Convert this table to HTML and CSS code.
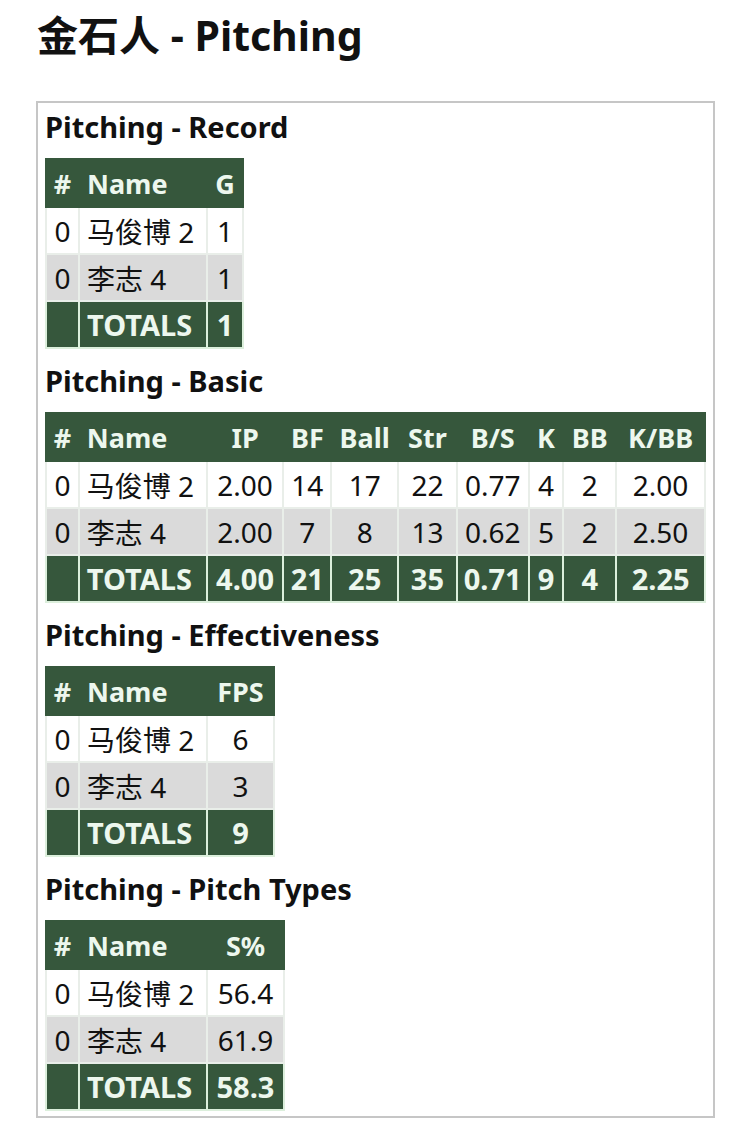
FILE: index.html
```html
<!DOCTYPE html>
<html lang="zh">
<head>
<meta charset="utf-8">
<title>金石人 - Pitching</title>
<link rel="stylesheet" href="styles.css">
</head>
<body>
<h1 class="page-title">金石人 - Pitching</h1>
<div class="report">
  <section class="block">
    <h2 class="block-title">Pitching - Record</h2>
    <table class="stats">
      <thead><tr><th class="num">#</th><th class="name">Name</th><th class="w36">G</th></tr></thead>
      <tbody>
        <tr><td class="num">0</td><td class="name">马俊博 2</td><td>1</td></tr>
        <tr class="alt"><td class="num">0</td><td class="name">李志 4</td><td>1</td></tr>
        <tr class="totals"><td class="num"></td><td class="name">TOTALS</td><td>1</td></tr>
      </tbody>
    </table>
  </section>
  <section class="block">
    <h2 class="block-title">Pitching - Basic</h2>
    <table class="stats">
      <thead><tr><th class="num">#</th><th class="name">Name</th><th class="w77">IP</th><th class="w48">BF</th><th class="w67">Ball</th><th class="w59">Str</th><th class="w72">B/S</th><th class="w35">K</th><th class="w53">BB</th><th class="w89">K/BB</th></tr></thead>
      <tbody>
        <tr><td class="num">0</td><td class="name">马俊博 2</td><td>2.00</td><td>14</td><td>17</td><td>22</td><td>0.77</td><td>4</td><td>2</td><td>2.00</td></tr>
        <tr class="alt"><td class="num">0</td><td class="name">李志 4</td><td>2.00</td><td>7</td><td>8</td><td>13</td><td>0.62</td><td>5</td><td>2</td><td>2.50</td></tr>
        <tr class="totals"><td class="num"></td><td class="name">TOTALS</td><td>4.00</td><td>21</td><td>25</td><td>35</td><td>0.71</td><td>9</td><td>4</td><td>2.25</td></tr>
      </tbody>
    </table>
  </section>
  <section class="block">
    <h2 class="block-title">Pitching - Effectiveness</h2>
    <table class="stats">
      <thead><tr><th class="num">#</th><th class="name">Name</th><th class="w67">FPS</th></tr></thead>
      <tbody>
        <tr><td class="num">0</td><td class="name">马俊博 2</td><td>6</td></tr>
        <tr class="alt"><td class="num">0</td><td class="name">李志 4</td><td>3</td></tr>
        <tr class="totals"><td class="num"></td><td class="name">TOTALS</td><td>9</td></tr>
      </tbody>
    </table>
  </section>
  <section class="block">
    <h2 class="block-title">Pitching - Pitch Types</h2>
    <table class="stats">
      <thead><tr><th class="num">#</th><th class="name">Name</th><th class="w77">S%</th></tr></thead>
      <tbody>
        <tr><td class="num">0</td><td class="name">马俊博 2</td><td>56.4</td></tr>
        <tr class="alt"><td class="num">0</td><td class="name">李志 4</td><td>61.9</td></tr>
        <tr class="totals"><td class="num"></td><td class="name">TOTALS</td><td>58.3</td></tr>
      </tbody>
    </table>
  </section>
</div>
</body>
</html>
```
FILE: styles.css
```css
html, body {
  margin: 0;
  padding: 0;
  background: #ffffff;
}
body {
  font-family: "Noto Sans", "Noto Sans CJK SC", sans-serif;
  color: #111111;
  padding: 0 25px 0 36px;
}
.page-title {
  margin: 0;
  padding: 8px 0 0 1px;
  height: 101px;
  box-sizing: border-box;
  font-size: 41px;
  line-height: 54px;
  font-weight: 700;
  color: #111;
}
.report {
  border: 2px solid #c6c6c6;
  padding: 7px 7px 5px 7px;
  display: flex;
  flex-direction: column;
  gap: 15px;
}
.block {
  display: flex;
  flex-direction: column;
  align-items: flex-start;
}
.block-title {
  margin: 0;
  height: 48px;
  font-size: 29px;
  line-height: 34px;
  font-weight: 700;
  color: #111;
}
.stats {
  border-collapse: collapse;
  border: 2px solid #9aab9c;
  font-size: 28px;
}
.stats th, .stats td {
  height: 47px;
  padding: 0;
  text-align: center;
  border: 2px solid #e9eee9;
  box-sizing: border-box;
  white-space: nowrap;
}
.stats thead th {
  background: #36573c;
  color: #edf7ee;
  font-weight: 700;
  font-size: 27px;
  border-color: #36573c;
  height: 48px;
}
.stats tbody tr {
  background: #ffffff;
}
.stats tbody tr.alt {
  background: #dadada;
}
.stats tbody tr.totals {
  background: #36573c;
  color: #edf7ee;
  font-weight: 700;
  font-size: 29px;
}
.stats tbody tr.totals td {
  border-color: #dcefdc;
}
.stats .num {
  width: 33px;
}
.stats .name {
  width: 128px;
  text-align: left;
  padding-left: 7px;
}
.w35 { width: 35px; }
.w36 { width: 36px; }
.w48 { width: 48px; }
.w53 { width: 53px; }
.w59 { width: 59px; }
.w67 { width: 67px; }
.w72 { width: 72px; }
.w77 { width: 77px; }
.w89 { width: 89px; }
```
